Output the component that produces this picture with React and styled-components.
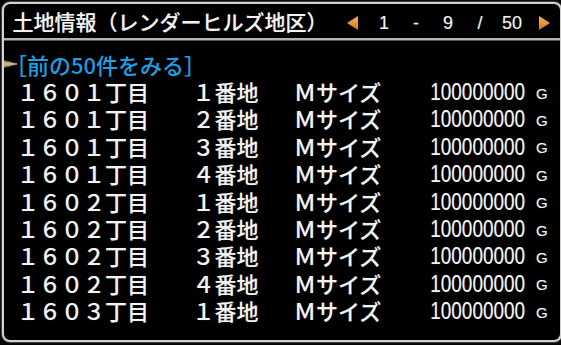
import React from "react";
import styled, { createGlobalStyle } from "styled-components";

const Global = createGlobalStyle`
  html, body { margin: 0; padding: 0; background: #050505; overflow: hidden; }
  body { width: 561px; height: 345px; }
  #root { width: 561px; height: 345px; }
`;

const Window = styled.div`
  box-sizing: border-box;
  margin: 2px 0 0 2px;
  width: 560px;
  height: 340px;
  border: 2px solid #d2d2d2;
  border-radius: 8px;
  background: #000;
  box-shadow: 0 0 1px 1px rgba(120,120,120,0.6);
  display: flex;
  flex-direction: column;
  overflow: hidden;
  font-family: "Noto Sans CJK JP", "Liberation Sans", sans-serif;
  font-weight: 500;
  color: #f2f2f2;
  text-shadow: 0 0 1px rgba(255,255,255,0.35);
`;

const Header = styled.div`
  height: 34px;
  flex: none;
  display: flex;
  align-items: center;
  padding-left: 8.5px;
  border-bottom: 2px solid #b4b4b4;
  box-shadow: 0 1px 0 #555;
`;

const Title = styled.div`
  font-size: 21px;
  line-height: 34px;
  white-space: nowrap;
  width: 315px;
`;

const Pager = styled.div`
  margin-left: 8.5px;
  display: grid;
  grid-template-columns: repeat(7, 32px);
  justify-items: center;
  align-items: center;
  font-family: "Liberation Sans", Arial, sans-serif;
  font-weight: 400;
  font-size: 18px;
  line-height: 34px;
  padding-top: 4px;
`;

const Tri = ({ dir }) => (
  <svg width="11" height="14" viewBox="0 0 11 14" style={{ display: "block" }}>
    <defs>
      <linearGradient id={`g${dir}`} x1="0" y1="0" x2="0" y2="1">
        <stop offset="0" stopColor="#f6b45a" />
        <stop offset="1" stopColor="#d87420" />
      </linearGradient>
    </defs>
    <polygon
      points={dir === "left" ? "11,0 0,7 11,14" : "0,0 11,7 0,14"}
      fill={`url(#g${dir})`}
    />
  </svg>
);

const Body = styled.div`
  position: relative;
  padding-top: 10px;
`;

const Cursor = styled.svg`
  position: absolute;
  left: -4px;
  top: 18px;
`;

const LinkRow = styled.div`
  padding-left: 1px;
  font-size: 22px;
  line-height: 28px;
  color: #1e9fe2;
  text-shadow: none;
  white-space: nowrap;
`;

const Row = styled.div`
  display: grid;
  grid-template-columns: 175.5px 101.5px 110px 121px auto;
  align-items: center;
  padding-left: 13px;
  height: 27.4px;
  font-size: 22px;
  white-space: nowrap;
`;

const Cell = styled.span`
  line-height: 27.4px;
`;

const Price = styled.span`
  justify-self: end;
  display: inline-block;
  font-family: "Liberation Sans", Arial, sans-serif;
  font-weight: 400;
  font-size: 24px;
  line-height: 27.4px;
  transform: scaleX(0.79);
  transform-origin: right center;
`;

const Unit = styled.span`
  font-family: "Liberation Sans", Arial, sans-serif;
  font-weight: 400;
  font-size: 15px;
  padding-left: 11px;
  padding-top: 3px;
`;

const rows = [
  ["１６０１丁目", "１番地"],
  ["１６０１丁目", "２番地"],
  ["１６０１丁目", "３番地"],
  ["１６０１丁目", "４番地"],
  ["１６０２丁目", "１番地"],
  ["１６０２丁目", "２番地"],
  ["１６０２丁目", "３番地"],
  ["１６０２丁目", "４番地"],
  ["１６０３丁目", "１番地"],
];

export default function App() {
  return (
    <>
      <Global />
      <Window>
        <Header>
          <Title>土地情報（レンダーヒルズ地区）</Title>
          <Pager>
            <Tri dir="left" />
            <span>1</span>
            <span>-</span>
            <span>9</span>
            <span>/</span>
            <span>50</span>
            <Tri dir="right" />
          </Pager>
        </Header>
        <Body>
          <Cursor width="18" height="12" viewBox="0 0 18 12">
            <polygon points="0,2 9,3.5 17,6 9,8.5 0,10 3,6" fill="#b89c6a" stroke="#6a5430" strokeWidth="0.8" />
            <polyline points="3,6 17,6" stroke="#e8d4a0" strokeWidth="1" />
          </Cursor>
          <LinkRow>［前の50件をみる］</LinkRow>
          {rows.map(([a, b], i) => (
            <Row key={i}>
              <Cell>{a}</Cell>
              <Cell>{b}</Cell>
              <Cell>Ｍサイズ</Cell>
              <Price>100000000</Price>
              <Unit>G</Unit>
            </Row>
          ))}
        </Body>
      </Window>
    </>
  );
}
